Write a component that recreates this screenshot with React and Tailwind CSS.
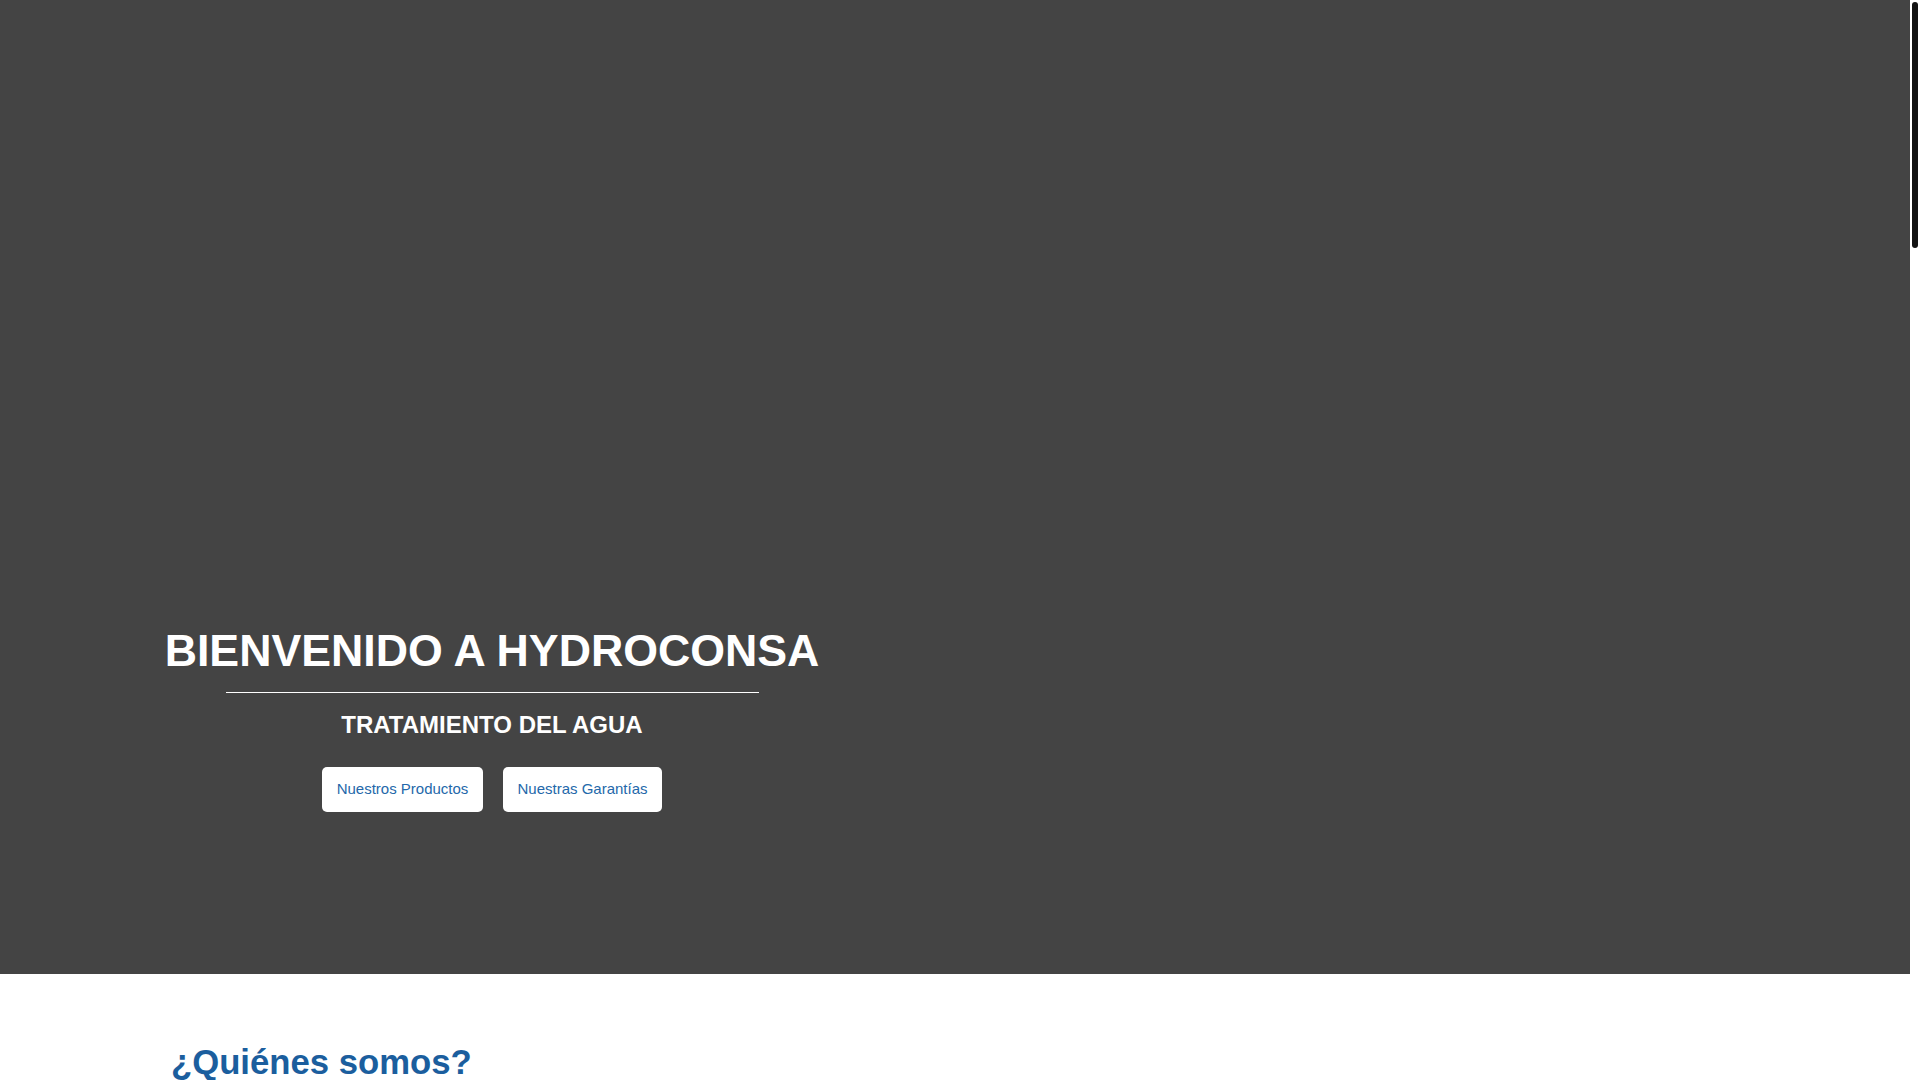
import React from "react";

export default function App() {
  return (
    <div
      className="flex w-full min-h-screen bg-white"
      style={{ fontFamily: '"Liberation Sans", Arial, sans-serif' }}
    >
      <main className="w-[1910px] shrink-0">
        <section className="h-[974px] bg-[#444444]">
          <div className="pl-[165px] pt-[626px]">
            <div className="w-[654px] flex flex-col items-center text-center">
              <h1 className="text-[44.7px] leading-[50px] font-bold text-white whitespace-nowrap">
                BIENVENIDO A HYDROCONSA
              </h1>
              <div className="mt-[16px] h-px w-[533px] bg-white" />
              <h2 className="mt-[18px] text-[24px] leading-[28px] font-bold text-white">
                TRATAMIENTO DEL AGUA
              </h2>
              <div className="mt-[28px] flex gap-[20px]">
                <a
                  href="#productos"
                  className="h-[45px] w-[161px] flex items-center justify-center rounded-[5px] bg-white text-[15px] text-[#2468aa]"
                >
                  Nuestros Productos
                </a>
                <a
                  href="#garantias"
                  className="h-[45px] w-[159px] flex items-center justify-center rounded-[5px] bg-white text-[15px] text-[#2468aa]"
                >
                  Nuestras Garantías
                </a>
              </div>
            </div>
          </div>
        </section>

        <section className="pl-[171px] pr-[166px] pt-[68px] pb-[200px]">
          <h2 className="text-[34.7px] leading-[40px] font-bold text-[#1b5e9e]">
            ¿Quiénes somos?
          </h2>
          <p className="mt-6 max-w-[900px] text-[16px] leading-[26px] text-[#555]">
            Somos una empresa dedicada al tratamiento del agua, ofreciendo
            soluciones integrales para hogares, comercios e industrias.
          </p>
        </section>
      </main>
      <aside className="w-[10px] shrink-0 bg-white">
        <div className="mx-auto mt-[2px] h-[246px] w-[6px] rounded-[3px] bg-[#121212]" />
      </aside>
    </div>
  );
}
